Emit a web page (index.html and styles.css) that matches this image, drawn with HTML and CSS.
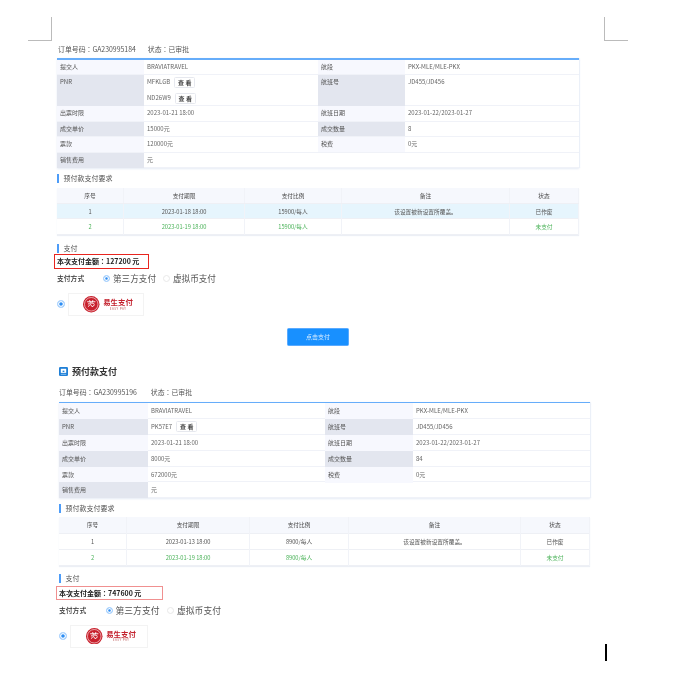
FILE: index.html
```html
<!DOCTYPE html>
<html lang="zh-CN">
<head>
<meta charset="utf-8">
<title>预付款支付</title>
<link rel="stylesheet" href="styles.css">
</head>
<body>
<div class="page">
  <i class="mark mark-tl"></i><i class="mark mark-tr"></i>
  <section class="order first">
    <p class="meta" lang="zh-TW"><span>订单号码：GA230995184</span><span>状态：已审批</span></p>
    <div class="info">
      <div class="row"><b>提交人</b><span>BRAVIATRAVEL</span><b>航段</b><span>PKX-MLE/MLE-PKX</span></div>
      <div class="row tall alt"><b>PNR</b><div class="pnrs"><div>MFKLGB<a class="look">查 看</a></div><div>ND26W9<a class="look">查 看</a></div></div><b>航班号</b><span>JD455/JD456</span></div>
      <div class="row"><b>出票时限</b><span>2023-01-21 18:00</span><b>航班日期</b><span>2023-01-22/2023-01-27</span></div>
      <div class="row alt"><b>成交单价</b><span>15000元</span><b>成交数量</b><span>8</span></div>
      <div class="row"><b>票款</b><span>120000元</span><b>税费</b><span>0元</span></div>
      <div class="row alt wide"><b>销售费用</b><span>元</span></div>
    </div>
    <h3 class="sub">预付款支付要求</h3>
    <div class="plan">
      <div class="tr head"><span>序号</span><span>支付期限</span><span>支付比例</span><span>备注</span><span>状态</span></div>
      <div class="tr hl"><span>1</span><span>2023-01-18 18:00</span><span>15900/每人</span><span>该设置被新设置所覆盖。</span><span>已作废</span></div>
      <div class="tr green"><span>2</span><span>2023-01-19 18:00</span><span>15900/每人</span><span></span><span>未支付</span></div>
    </div>
    <h3 class="sub pay">支付</h3>
    <p class="amount" lang="zh-TW">本次支付金额：127200 元</p>
    <div class="method"><span class="mlabel">支付方式</span><i class="radio on"></i><span class="opt">第三方支付</span><i class="radio"></i><span class="opt">虚拟币支付</span></div>
    <div class="channel"><i class="radio on"></i><div class="logo">
      <svg class="seal" viewBox="0 0 20 20"><circle cx="10" cy="10" r="10" fill="#c8202c"/><circle cx="10" cy="10" r="8.2" fill="none" stroke="#fff" stroke-width=".7"/><path d="M5 7h10M6 10c2-2 5-2 8 0M6 13l3-3 2 3 3-2M8 5l1 3M12 5l-1 3" fill="none" stroke="#fff" stroke-width="1.1"/></svg>
      <div class="brand"><strong>易生支付</strong><small>EASY PAY</small></div>
    </div></div>
    <div class="submit"><button type="button">点击支付</button></div>
  </section>
  <h2 class="title"><svg class="ticon" viewBox="0 0 10 10"><rect width="10" height="10" rx="1.5" fill="#1f7fd6"/><rect x="2" y="2" width="6" height="4.5" fill="#fff"/><rect x="4" y="4" width="2" height="1.5" fill="#1f7fd6"/><rect x="2" y="7.6" width="6" height="1" fill="#8fc4f0"/></svg>预付款支付</h2>
  <section class="order second">
    <p class="meta" lang="zh-TW"><span>订单号码：GA230995196</span><span>状态：已审批</span></p>
    <div class="info">
      <div class="row"><b>提交人</b><span>BRAVIATRAVEL</span><b>航段</b><span>PKX-MLE/MLE-PKX</span></div>
      <div class="row alt"><b>PNR</b><div class="pnrs"><div>PK57E7<a class="look">查 看</a></div></div><b>航班号</b><span>JD455/JD456</span></div>
      <div class="row"><b>出票时限</b><span>2023-01-21 18:00</span><b>航班日期</b><span>2023-01-22/2023-01-27</span></div>
      <div class="row alt"><b>成交单价</b><span>8000元</span><b>成交数量</b><span>84</span></div>
      <div class="row"><b>票款</b><span>672000元</span><b>税费</b><span>0元</span></div>
      <div class="row alt wide"><b>销售费用</b><span>元</span></div>
    </div>
    <h3 class="sub">预付款支付要求</h3>
    <div class="plan">
      <div class="tr head"><span>序号</span><span>支付期限</span><span>支付比例</span><span>备注</span><span>状态</span></div>
      <div class="tr"><span>1</span><span>2023-01-13 18:00</span><span>8900/每人</span><span>该设置被新设置所覆盖。</span><span>已作废</span></div>
      <div class="tr green"><span>2</span><span>2023-01-19 18:00</span><span>8900/每人</span><span></span><span>未支付</span></div>
    </div>
    <h3 class="sub pay">支付</h3>
    <p class="amount" lang="zh-TW">本次支付金额：747600 元</p>
    <div class="method"><span class="mlabel">支付方式</span><i class="radio on"></i><span class="opt">第三方支付</span><i class="radio"></i><span class="opt">虚拟币支付</span></div>
    <div class="channel"><i class="radio on"></i><div class="logo">
      <svg class="seal" viewBox="0 0 20 20"><circle cx="10" cy="10" r="10" fill="#c8202c"/><circle cx="10" cy="10" r="8.2" fill="none" stroke="#fff" stroke-width=".7"/><path d="M5 7h10M6 10c2-2 5-2 8 0M6 13l3-3 2 3 3-2M8 5l1 3M12 5l-1 3" fill="none" stroke="#fff" stroke-width="1.1"/></svg>
      <div class="brand"><strong>易生支付</strong><small>EASY PAY</small></div>
    </div></div>
  </section>
  <i class="caret"></i>
</div>
</body>
</html>
```
FILE: styles.css
```css
* { box-sizing: border-box; }
html, body { margin: 0; background: #fff; }
body { font-family: "Noto Sans CJK SC", "Noto Sans", sans-serif; color: #555; }
.page { position: relative; width: 678px; height: 675px; overflow: hidden; padding-top: 44px; filter: blur(.4px); }

.mark { position: absolute; display: block; width: 24px; height: 24px; top: 17px; border-bottom: 1px solid #bbb; }
.mark-tl { left: 28px; border-right: 1px solid #bbb; }
.mark-tr { left: 604px; border-left: 1px solid #bbb; }
.caret { position: absolute; left: 605px; top: 644px; width: 2px; height: 17px; background: #000; }

.order { --label: 87px; --value: 174px; --label2: 87px; --fs: 6px; --rowh: 15.6px; --rowlh: 14.8px; }
.first { margin-left: 57px; width: 522px; }
.second { margin: 9px 0 0 59px; width: 531px; --label: 89px; --value: 177px; --label2: 88px; --rowh: 15.9px; --rowlh: 16px; }

.meta { margin: 0; height: 10px; display: flex; gap: 12px; font: 400 6.9px/10px "Noto Sans CJK TC", "Noto Sans", sans-serif; color: #555; }
.first .meta { padding-left: 1px; }
.second .meta { gap: 14px; }

.info { margin-top: 3.5px; border-top: 2px solid #66adfa; box-shadow: 0 1px 2px #e6ebf5, 1px 0 1px #eef2fa; font-size: var(--fs); }
.second .info { margin-top: 5px; border-top-width: 1.5px; }
.row { display: grid; grid-template-columns: var(--label) var(--value) var(--label2) 1fr; height: var(--rowh); border-bottom: 1px solid #f0f2f8; line-height: var(--rowlh); }
.row.tall { height: 31px; }
.row b { font-weight: 400; padding-left: 3px; background: #f7f8fe; color: #555; }
.row.alt b { background: #e3e6ef; }
.row > span, .pnrs { padding-left: 3px; color: #666; }
.row.wide { grid-template-columns: var(--label) 1fr; }

.pnrs > div { height: 15.5px; display: flex; align-items: center; }
.look { display: inline-block; margin-left: 4px; width: 21px; height: 11px; line-height: 9.5px; text-align: center; border: 1px solid #e6e8ee; border-radius: 1.5px; color: #444; font-weight: 700; background: #fff; }

.sub { margin: 0; padding-left: 4.5px; height: 9px; font-size: 7px; line-height: 9px; font-weight: 400; color: #555; border-left: 2.5px solid #4d9cf8; }
.info + .sub { margin-top: 5.5px; }

.plan { margin-top: 5px; font-size: 5.7px; box-shadow: 0 1px 1px #eceff5; }
.second .plan { margin-top: 4.5px; }
.tr { display: grid; height: 15.5px; line-height: 15.5px; text-align: center; border-bottom: 1px solid #eef0f5; color: #555; }
.second .tr { height: 15.8px; line-height: 15.8px; }
.first .tr { grid-template-columns: 67px 121px 97px 168px 69px; }
.second .tr { grid-template-columns: 68px 123px 99px 172px 69px; }
.tr > span { border-right: 1px solid #f1f3f8; }
.tr.head { background: #f6f8fd; color: #444; height: 16px; }
.second .tr.head { height: 16.6px; line-height: 16.6px; }
.tr.hl { background: #e6f5fd; }
.tr.green { color: #4cb35a; }

.pay { margin-top: 9px; }
.second .pay { margin-top: 8.5px; }
.amount { margin: 1px 0 0 -3px; padding-left: 2px; height: 15px; width: 95px; font: 700 7px/13px "Noto Sans CJK TC", "Noto Sans", sans-serif; color: #222; border: 1.2px solid #e8251f; }
.second .amount { width: 107px; height: 14px; line-height: 12px; margin-top: 3px; border: 1px solid #f09090; }

.method { display: flex; align-items: center; height: 12px; margin-top: 3.5px; }
.second .method { margin-top: 4px; }
.mlabel { width: 46px; font-size: 6.8px; font-weight: 500; color: #333; }
.radio { display: block; flex: none; width: 7px; height: 7px; border-radius: 50%; border: 1px solid #e8e8e8; background: #fff; }
.radio.on { border-color: #b5d8fd; background: #2c8df4; box-shadow: inset 0 0 0 1.2px #fff; }
.opt { font-size: 8.6px; color: #555; margin: 0 7px 0 3px; }
.second .mlabel { width: 46.5px; }
.second .opt { font-size: 8.8px; margin-right: 7.5px; }

.channel { display: flex; align-items: center; gap: 3px; margin-top: 8.5px; }
.channel .radio { width: 8px; height: 8px; }
.logo { width: 76px; height: 23px; padding-left: 4px; border: 1px solid #f3f3f3; display: flex; align-items: center; justify-content: center; gap: 3.5px; }
.second .logo { width: 78px; }
.seal { width: 16.5px; height: 16.5px; }
.brand { display: flex; flex-direction: column; align-items: center; }
.brand strong { font-size: 7.4px; line-height: 8.5px; color: #c3202c; }
.brand small { font-size: 3px; line-height: 4px; color: #b55; letter-spacing: .5px; }

.submit { display: flex; justify-content: center; margin-top: 12px; }
.submit button { width: 62px; height: 18px; padding: 0; border: 1px solid #59aaff; border-radius: 1.5px; background: #1890ff; color: #d7ecff; font: 400 6px "Noto Sans CJK SC", sans-serif; }

.title { margin: 20px 0 0 59px; height: 12px; display: flex; align-items: center; gap: 4px; font-size: 9px; font-weight: 700; color: #333; }
.ticon { width: 9px; height: 9px; }
```
